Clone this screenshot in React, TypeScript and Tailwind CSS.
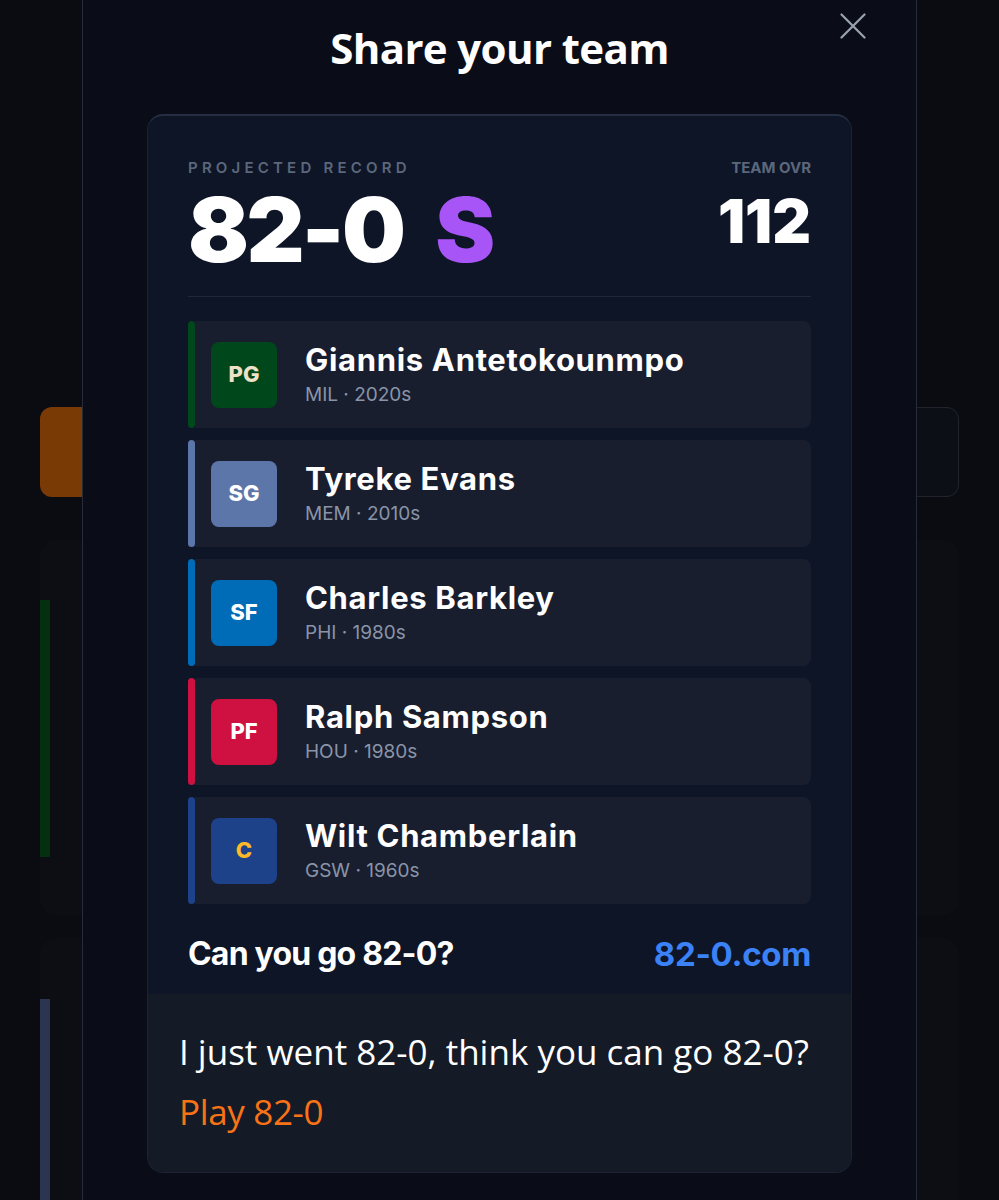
import React from 'react';

type Player = {
  pos: string;
  name: string;
  team: string;
  era: string;
  bar: string;
  badge: string;
};

const roster: Player[] = [
  { pos: 'PG', name: 'Giannis Antetokounmpo', team: 'MIL', era: '2020s', bar: 'bg-[#00471b]', badge: 'bg-[#00471b] text-[#eee1c6]' },
  { pos: 'SG', name: 'Tyreke Evans', team: 'MEM', era: '2010s', bar: 'bg-[#5d76a9]', badge: 'bg-[#5d76a9] text-white' },
  { pos: 'SF', name: 'Charles Barkley', team: 'PHI', era: '1980s', bar: 'bg-[#006bb6]', badge: 'bg-[#006bb6] text-white' },
  { pos: 'PF', name: 'Ralph Sampson', team: 'HOU', era: '1980s', bar: 'bg-[#ce1141]', badge: 'bg-[#ce1141] text-white' },
  { pos: 'C', name: 'Wilt Chamberlain', team: 'GSW', era: '1960s', bar: 'bg-[#1d428a]', badge: 'bg-[#1d428a] text-[#fdb927]' },
];

const inter = "font-['Inter','Liberation_Sans',sans-serif]";
const sans = "font-['Open_Sans','Noto_Sans',sans-serif]";

const PlayerRow: React.FC<{ p: Player }> = ({ p }) => (
  <div className="flex h-[107px]">
    <div className={`w-[7px] rounded-full ${p.bar}`} />
    <div className="flex flex-1 items-center rounded-r-lg bg-[#181e2e] pl-[16px]">
      <div className={`flex h-[66px] w-[66px] items-center justify-center rounded-lg text-[22px] font-extrabold ${p.badge}`}>
        {p.pos}
      </div>
      <div className="ml-[28px] flex flex-col">
        <span className="text-[31px] font-bold leading-[36px] tracking-[0.022em] text-white">{p.name}</span>
        <span className="mt-[5px] text-[19px] leading-[24px] text-[#8a94a8]">
          {p.team} · {p.era}
        </span>
      </div>
    </div>
  </div>
);

const ShareCard: React.FC = () => (
  <div className="mt-[42px] overflow-hidden rounded-2xl border border-[#1c2334] border-t-2 border-t-[#252e42] bg-[#0e1527]">
    <div className={`px-[40px] pt-[42px] ${inter}`}>
      <div className="flex items-start justify-between">
        <div>
          <div className="text-[15px] font-semibold leading-[20px] tracking-[0.28em] text-[#5c677c]">PROJECTED RECORD</div>
          <div className="mt-[7px] flex items-baseline gap-[32px] text-[90px] font-black leading-none tracking-[-0.03em]">
            <span className="text-white">82-0</span>
            <span className="text-[#a855f7]">S</span>
          </div>
        </div>
        <div className="flex flex-col items-end">
          <div className="text-[15px] font-bold leading-[20px] text-[#5c677c]">TEAM OVR</div>
          <div className="mt-[13px] text-[60px] font-black leading-none text-white">112</div>
        </div>
      </div>

      <div className="mt-[21px] h-px bg-[#1f2839]" />

      <div className="mt-[24px] flex flex-col gap-[12px]">
        {roster.map((p) => (
          <PlayerRow key={p.pos} p={p} />
        ))}
      </div>

      <div className="mt-[34px] flex items-center justify-between pb-[24px]">
        <span className="text-[32px] font-bold leading-[32px] tracking-[-0.025em] text-white">Can you go 82-0?</span>
        <span className="text-[33px] font-bold leading-[32px] tracking-[-0.01em] text-[#3b82f6]">82-0.com</span>
      </div>
    </div>

    <div className={`bg-[#151a27] px-[31px] pb-[40px] pt-[38px] ${sans}`}>
      <p className="text-[35px] leading-[40px] text-white">I just went 82-0, think you can go 82-0?</p>
      <p className="mt-[20px] text-[35px] leading-[40px] tracking-[-0.01em] text-[#f97316]">Play 82-0</p>
    </div>
  </div>
);

export default function App() {
  return (
    <div className="relative h-[1200px] overflow-hidden bg-[#0a0c12]">
      {/* page underneath the modal */}
      <div className="px-10 pt-[407px]">
        <div className="flex h-[90px] gap-4">
          <div className="w-[200px] rounded-xl bg-[#7a3a06]" />
          <div className="flex-1 rounded-xl border border-[#20242e] bg-[#0c0f15]" />
        </div>
        <div className="mt-[43px] h-[375px] rounded-2xl bg-[#0c0e14] pt-[60px]">
          <div className="h-[257px] w-[10px] bg-[#05300f]" />
        </div>
        <div className="mt-[23px] h-[320px] rounded-2xl bg-[#0c0e14] pt-[61px]">
          <div className="h-full w-[10px] bg-[#2b3450]" />
        </div>
      </div>

      {/* share modal */}
      <div className="absolute inset-0 flex justify-center">
        <div className="relative h-full w-[835px] border-x border-[#262c3a] bg-[#0a0d17] px-16 pt-6">
          <button className="absolute right-[50px] top-[13px] text-[#9aa2b1]" aria-label="Close">
            <svg width="26" height="26" viewBox="0 0 26 26" fill="none" stroke="currentColor" strokeWidth="2.2" strokeLinecap="round">
              <path d="M1.5 1.5L24.5 24.5M24.5 1.5L1.5 24.5" />
            </svg>
          </button>
          <h2 className={`text-center text-[42px] font-bold leading-[48px] tracking-[-0.015em] text-white ${sans}`}>Share your team</h2>
          <ShareCard />
        </div>
      </div>
    </div>
  );
}
